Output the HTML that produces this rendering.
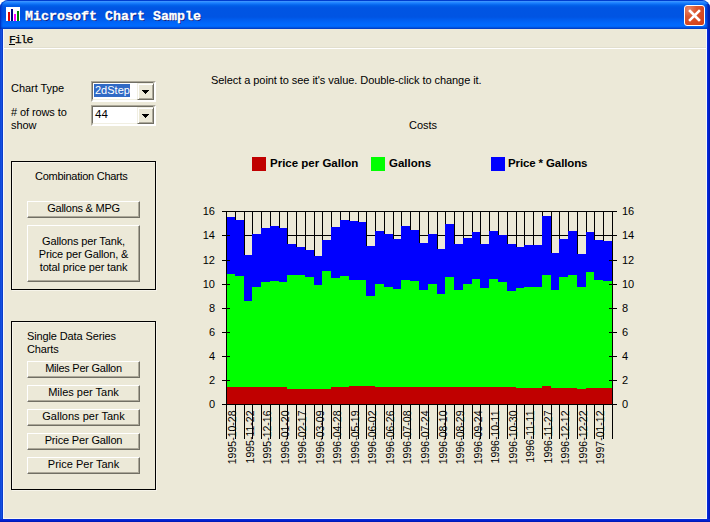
<!DOCTYPE html>
<html><head><meta charset="utf-8">
<style>
html,body{margin:0;padding:0;width:710px;height:522px;overflow:hidden;background:#fff;}
body{position:relative;font-family:"Liberation Sans",sans-serif;font-size:11px;color:#000;}
.abs{position:absolute;}
#win{position:absolute;left:0;top:0;width:710px;height:522px;border-radius:8px 8px 0 0;overflow:hidden;
 background:linear-gradient(to right,#0019CF 0,#0831D9 1px,#166AEE 2px,#166AEE 3px,transparent 3px);}
#title{position:absolute;left:0;top:0;width:710px;height:29px;
 background:linear-gradient(to bottom,#0058EE 0,#0058EE 1px,#3A93FF 1px,#3A93FF 2px,#288EFF 2px,#1C7FFF 3px,#0F71F5 4px,#0466EC 5px,#005CE8 6px,#0055E3 8px,#0054E3 17px,#005EF0 20px,#0066FA 23px,#006BFF 26px,#0060F0 27px,#0048D0 28px,#0038C0 29px);}
#frame{position:absolute;left:0;top:29px;width:710px;height:493px;background:#0831D9;}
#frameL{position:absolute;left:0;top:29px;width:3px;height:493px;background:linear-gradient(to right,#0A3FD0 0,#1450E0 1px,#1450E0 2px,#0A3CCB 2px,#0A3CCB 3px);}
#frameR{position:absolute;left:707px;top:29px;width:3px;height:493px;background:linear-gradient(to right,#0831D9 0,#0019CF 2px,#001EA0 3px);}
#frameB{position:absolute;left:0;top:519px;width:710px;height:3px;background:linear-gradient(to bottom,#0831D9 0,#0019CF 2px,#001EA0 3px);}
#client{position:absolute;left:3px;top:29px;width:704px;height:490px;background:#ECE9D8;}
#cl{position:absolute;left:3px;top:29px;width:1px;height:490px;background:#F4F7FE;}
#cr{position:absolute;left:706px;top:29px;width:1px;height:490px;background:#F4F7FE;}
#cb{position:absolute;left:3px;top:518px;width:704px;height:1px;background:#FAF8F0;}
#icon{position:absolute;left:6px;top:7px;width:14px;height:14px;background:#fff;}
#icon i{position:absolute;bottom:0;width:2px;}
#ttext{position:absolute;left:25px;top:9px;-webkit-text-stroke:0.3px #fff;font-family:"Liberation Mono",monospace;font-weight:bold;font-size:13.33px;line-height:16px;color:#fff;text-shadow:1px 1px 0 #0A1E80;white-space:pre;}
#close{position:absolute;left:684px;top:5px;width:19px;height:19px;border:1px solid #fff;border-radius:3px;
 background:radial-gradient(circle at 20% 15%,#E8876A 0,#DB5730 35%,#D5461E 75%,#D23C14 100%);}
#menu{position:absolute;left:9px;top:33px;font-family:"Liberation Mono",monospace;font-size:11.5px;line-height:13px;letter-spacing:-1.1px;white-space:pre;-webkit-text-stroke:0.25px #000;}
#sep{position:absolute;left:4px;top:48px;width:702px;height:1px;background:#fff;}
#sep2{position:absolute;left:4px;top:47px;width:702px;height:1px;background:#E2DFCE;}
.lbl{position:absolute;white-space:pre;font-size:11px;line-height:13px;}
.combo{position:absolute;width:61px;height:17px;border:2px solid;border-color:#ACA899 #fff #fff #ACA899;background:#fff;}
.combo .in{position:absolute;left:-1px;top:-1px;width:62px;height:18px;border:1px solid;border-color:#716F64 #F1EFE2 #F1EFE2 #716F64;box-sizing:border-box;}
.combo .btn{position:absolute;left:44px;top:0px;width:17px;height:17px;box-sizing:border-box;background:#ECE9D8;border:1px solid;border-color:#F1EFE2 #716F64 #716F64 #F1EFE2;box-shadow:inset 1px 1px 0 #fff,inset -1px -1px 0 #ACA899;}
.combo .arr{position:absolute;left:4px;top:6px;width:7px;height:4px;}
.combo .arr i{position:absolute;height:1px;background:#000;}
.combo .txt{position:absolute;left:1px;top:1px;font-size:11px;line-height:13px;white-space:pre;}
.grp{position:absolute;border:1px solid #000;box-sizing:border-box;box-shadow:inset 1px 1px 0 #F6F4EA,1px 1px 0 #F6F4EA;}
.b{position:absolute;box-sizing:border-box;letter-spacing:-0.25px;background:#ECE9D8;border:1px solid;border-color:#fff #716F64 #716F64 #fff;box-shadow:inset -1px -1px 0 #ACA899;text-align:center;font-size:11px;line-height:13px;white-space:pre;}
.sq{position:absolute;width:14px;height:14px;}
.lg{position:absolute;font-weight:bold;font-size:11.5px;line-height:13px;white-space:pre;}
.yl{font-family:"Liberation Sans",sans-serif;font-size:11px;fill:#000;}
.xl{font-family:"Liberation Sans",sans-serif;font-size:10.5px;fill:#000;}
</style></head><body>
<div id="win">
 <div id="title"></div>
 <div style="position:absolute;left:705px;top:4px;width:5px;height:25px;background:linear-gradient(to right,rgba(0,40,200,0) 0,rgba(0,40,200,0.5) 2px,#0028B8 3px,#001EA0 5px)"></div>
 <div style="position:absolute;left:0;top:0;width:710px;height:40px;box-sizing:border-box;border:1px solid rgba(0,40,180,0.55);border-bottom:none;border-radius:8px 8px 0 0"></div>
 <div style="position:absolute;left:0;top:4px;width:3px;height:25px;background:linear-gradient(to right,rgba(0,40,190,0.7),rgba(0,40,190,0))"></div>
 <div id="frameL"></div><div id="frameR"></div><div id="frameB"></div>
 <div id="client"></div>
 <div id="cl"></div><div id="cr"></div><div id="cb"></div>
 <div id="icon"><i style="left:2px;height:9px;background:#E00000"></i><i style="left:5px;height:12px;background:#000080"></i><i style="left:8px;height:7px;background:#FF00FF"></i><i style="left:11px;height:10px;background:#008000"></i></div>
 <div id="ttext">Microsoft Chart Sample</div>
 <div id="close"><svg width="19" height="19" style="position:absolute;left:0;top:0"><path d="M5 5 L14 14 M14 5 L5 14" stroke="#fff" stroke-width="2.6" stroke-linecap="square"/></svg></div>
</div>
<div id="menu">File</div><div style="position:absolute;left:9px;top:44px;width:6px;height:1px;background:#000"></div>
<div id="sep2"></div><div id="sep"></div>

<div class="lbl" style="left:11px;top:82px;letter-spacing:-0.05px">Chart Type</div>
<div class="lbl" style="left:11px;top:106px;letter-spacing:-0.1px"># of rows to
show</div>
<div class="combo" style="left:91px;top:81px"><div class="in"></div><div class="txt" style="left:1px;top:1px;width:36px;height:13px;background:#316AC5;color:#fff;font-size:11px;text-indent:1px">2dStep</div><div class="btn"><div class="arr"><i style="left:0;top:0;width:7px"></i><i style="left:1px;top:1px;width:5px"></i><i style="left:2px;top:2px;width:3px"></i><i style="left:3px;top:3px;width:1px"></i></div></div></div>
<div class="combo" style="left:91px;top:105px"><div class="in"></div><div class="txt" style="left:2px;font-size:11.5px">44</div><div class="btn"><div class="arr"><i style="left:0;top:0;width:7px"></i><i style="left:1px;top:1px;width:5px"></i><i style="left:2px;top:2px;width:3px"></i><i style="left:3px;top:3px;width:1px"></i></div></div></div>

<div class="grp" style="left:11px;top:161px;width:145px;height:129px"></div>
<div class="lbl" style="left:35px;top:170px;letter-spacing:-0.26px">Combination Charts</div>
<div class="b" style="left:27px;top:201px;width:113px;height:17px">Gallons &amp; MPG</div>
<div class="b" style="left:27px;top:225px;width:113px;height:57px;padding-top:9px;letter-spacing:-0.15px">Gallons per Tank,
Price per Gallon, &amp;
total price per tank</div>

<div class="grp" style="left:11px;top:321px;width:145px;height:169px"></div>
<div class="lbl" style="left:27px;top:330px;letter-spacing:-0.12px">Single Data Series
Charts</div>
<div class="b" style="left:27px;top:361px;width:113px;height:17px">Miles Per Gallon</div>
<div class="b" style="left:27px;top:385px;width:113px;height:17px;letter-spacing:0">Miles per Tank</div>
<div class="b" style="left:27px;top:409px;width:113px;height:17px;letter-spacing:0">Gallons per Tank</div>
<div class="b" style="left:27px;top:433px;width:113px;height:17px;letter-spacing:-0.15px">Price Per Gallon</div>
<div class="b" style="left:27px;top:457px;width:113px;height:17px;letter-spacing:0">Price Per Tank</div>

<div class="lbl" style="left:211px;top:74px;letter-spacing:-0.06px">Select a point to see it's value. Double-click to change it.</div>
<div class="lbl" style="left:409px;top:119px">Costs</div>
<div class="sq" style="left:252px;top:157px;background:#C00000"></div>
<div class="lg" style="left:270px;top:157px">Price per Gallon</div>
<div class="sq" style="left:371px;top:157px;background:#00FF00"></div>
<div class="lg" style="left:389px;top:157px">Gallons</div>
<div class="sq" style="left:491px;top:157px;background:#0000FF"></div>
<div class="lg" style="left:508px;top:157px;letter-spacing:-0.12px">Price * Gallons</div>
<svg width="710" height="522" style="position:absolute;left:0;top:0" shape-rendering="crispEdges"><rect x="235" y="211" width="1" height="193" fill="#000"/><rect x="244" y="211" width="1" height="193" fill="#000"/><rect x="252" y="211" width="1" height="193" fill="#000"/><rect x="261" y="211" width="1" height="193" fill="#000"/><rect x="270" y="211" width="1" height="193" fill="#000"/><rect x="279" y="211" width="1" height="193" fill="#000"/><rect x="287" y="211" width="1" height="193" fill="#000"/><rect x="296" y="211" width="1" height="193" fill="#000"/><rect x="305" y="211" width="1" height="193" fill="#000"/><rect x="314" y="211" width="1" height="193" fill="#000"/><rect x="322" y="211" width="1" height="193" fill="#000"/><rect x="331" y="211" width="1" height="193" fill="#000"/><rect x="340" y="211" width="1" height="193" fill="#000"/><rect x="349" y="211" width="1" height="193" fill="#000"/><rect x="358" y="211" width="1" height="193" fill="#000"/><rect x="366" y="211" width="1" height="193" fill="#000"/><rect x="375" y="211" width="1" height="193" fill="#000"/><rect x="384" y="211" width="1" height="193" fill="#000"/><rect x="393" y="211" width="1" height="193" fill="#000"/><rect x="401" y="211" width="1" height="193" fill="#000"/><rect x="410" y="211" width="1" height="193" fill="#000"/><rect x="419" y="211" width="1" height="193" fill="#000"/><rect x="428" y="211" width="1" height="193" fill="#000"/><rect x="437" y="211" width="1" height="193" fill="#000"/><rect x="445" y="211" width="1" height="193" fill="#000"/><rect x="454" y="211" width="1" height="193" fill="#000"/><rect x="463" y="211" width="1" height="193" fill="#000"/><rect x="472" y="211" width="1" height="193" fill="#000"/><rect x="480" y="211" width="1" height="193" fill="#000"/><rect x="489" y="211" width="1" height="193" fill="#000"/><rect x="498" y="211" width="1" height="193" fill="#000"/><rect x="507" y="211" width="1" height="193" fill="#000"/><rect x="516" y="211" width="1" height="193" fill="#000"/><rect x="524" y="211" width="1" height="193" fill="#000"/><rect x="533" y="211" width="1" height="193" fill="#000"/><rect x="542" y="211" width="1" height="193" fill="#000"/><rect x="551" y="211" width="1" height="193" fill="#000"/><rect x="559" y="211" width="1" height="193" fill="#000"/><rect x="568" y="211" width="1" height="193" fill="#000"/><rect x="577" y="211" width="1" height="193" fill="#000"/><rect x="586" y="211" width="1" height="193" fill="#000"/><rect x="594" y="211" width="1" height="193" fill="#000"/><rect x="603" y="211" width="1" height="193" fill="#000"/><rect x="226" y="211" width="386" height="1" fill="#000"/><rect x="226" y="235" width="386" height="1" fill="#000"/><rect x="226" y="260" width="386" height="1" fill="#000"/><rect x="226" y="284" width="386" height="1" fill="#000"/><rect x="226" y="308" width="386" height="1" fill="#000"/><rect x="226" y="332" width="386" height="1" fill="#000"/><rect x="226" y="356" width="386" height="1" fill="#000"/><rect x="226" y="380" width="386" height="1" fill="#000"/><rect x="226" y="404" width="386" height="1" fill="#000"/><rect x="227" y="217" width="8" height="187" fill="#0000FF"/><rect x="235" y="220" width="9" height="184" fill="#0000FF"/><rect x="244" y="255" width="8" height="149" fill="#0000FF"/><rect x="252" y="234" width="9" height="170" fill="#0000FF"/><rect x="261" y="228" width="9" height="176" fill="#0000FF"/><rect x="270" y="226" width="9" height="178" fill="#0000FF"/><rect x="279" y="228" width="8" height="176" fill="#0000FF"/><rect x="287" y="244" width="9" height="160" fill="#0000FF"/><rect x="296" y="247" width="9" height="157" fill="#0000FF"/><rect x="305" y="250" width="9" height="154" fill="#0000FF"/><rect x="314" y="256" width="8" height="148" fill="#0000FF"/><rect x="322" y="240" width="9" height="164" fill="#0000FF"/><rect x="331" y="227" width="9" height="177" fill="#0000FF"/><rect x="340" y="220" width="9" height="184" fill="#0000FF"/><rect x="349" y="221" width="9" height="183" fill="#0000FF"/><rect x="358" y="222" width="8" height="182" fill="#0000FF"/><rect x="366" y="246" width="9" height="158" fill="#0000FF"/><rect x="375" y="231" width="9" height="173" fill="#0000FF"/><rect x="384" y="234" width="9" height="170" fill="#0000FF"/><rect x="393" y="239" width="8" height="165" fill="#0000FF"/><rect x="401" y="226" width="9" height="178" fill="#0000FF"/><rect x="410" y="230" width="9" height="174" fill="#0000FF"/><rect x="419" y="243" width="9" height="161" fill="#0000FF"/><rect x="428" y="234" width="9" height="170" fill="#0000FF"/><rect x="437" y="249" width="8" height="155" fill="#0000FF"/><rect x="445" y="224" width="9" height="180" fill="#0000FF"/><rect x="454" y="244" width="9" height="160" fill="#0000FF"/><rect x="463" y="238" width="9" height="166" fill="#0000FF"/><rect x="472" y="232" width="8" height="172" fill="#0000FF"/><rect x="480" y="244" width="9" height="160" fill="#0000FF"/><rect x="489" y="231" width="9" height="173" fill="#0000FF"/><rect x="498" y="235" width="9" height="169" fill="#0000FF"/><rect x="507" y="244" width="9" height="160" fill="#0000FF"/><rect x="516" y="247" width="8" height="157" fill="#0000FF"/><rect x="524" y="245" width="9" height="159" fill="#0000FF"/><rect x="533" y="245" width="9" height="159" fill="#0000FF"/><rect x="542" y="216" width="9" height="188" fill="#0000FF"/><rect x="551" y="253" width="8" height="151" fill="#0000FF"/><rect x="559" y="239" width="9" height="165" fill="#0000FF"/><rect x="568" y="231" width="9" height="173" fill="#0000FF"/><rect x="577" y="254" width="9" height="150" fill="#0000FF"/><rect x="586" y="232" width="8" height="172" fill="#0000FF"/><rect x="594" y="240" width="9" height="164" fill="#0000FF"/><rect x="603" y="241" width="9" height="163" fill="#0000FF"/><rect x="227" y="274" width="8" height="130" fill="#00FF00"/><rect x="235" y="276" width="9" height="128" fill="#00FF00"/><rect x="244" y="301" width="8" height="103" fill="#00FF00"/><rect x="252" y="287" width="9" height="117" fill="#00FF00"/><rect x="261" y="282" width="9" height="122" fill="#00FF00"/><rect x="270" y="281" width="9" height="123" fill="#00FF00"/><rect x="279" y="282" width="8" height="122" fill="#00FF00"/><rect x="287" y="275" width="9" height="129" fill="#00FF00"/><rect x="296" y="275" width="9" height="129" fill="#00FF00"/><rect x="305" y="277" width="9" height="127" fill="#00FF00"/><rect x="314" y="285" width="8" height="119" fill="#00FF00"/><rect x="322" y="271" width="9" height="133" fill="#00FF00"/><rect x="331" y="278" width="9" height="126" fill="#00FF00"/><rect x="340" y="276" width="9" height="128" fill="#00FF00"/><rect x="349" y="280" width="9" height="124" fill="#00FF00"/><rect x="358" y="280" width="8" height="124" fill="#00FF00"/><rect x="366" y="296" width="9" height="108" fill="#00FF00"/><rect x="375" y="284" width="9" height="120" fill="#00FF00"/><rect x="384" y="287" width="9" height="117" fill="#00FF00"/><rect x="393" y="289" width="8" height="115" fill="#00FF00"/><rect x="401" y="280" width="9" height="124" fill="#00FF00"/><rect x="410" y="281" width="9" height="123" fill="#00FF00"/><rect x="419" y="290" width="9" height="114" fill="#00FF00"/><rect x="428" y="284" width="9" height="120" fill="#00FF00"/><rect x="437" y="294" width="8" height="110" fill="#00FF00"/><rect x="445" y="277" width="9" height="127" fill="#00FF00"/><rect x="454" y="290" width="9" height="114" fill="#00FF00"/><rect x="463" y="284" width="9" height="120" fill="#00FF00"/><rect x="472" y="279" width="8" height="125" fill="#00FF00"/><rect x="480" y="288" width="9" height="116" fill="#00FF00"/><rect x="489" y="279" width="9" height="125" fill="#00FF00"/><rect x="498" y="282" width="9" height="122" fill="#00FF00"/><rect x="507" y="291" width="9" height="113" fill="#00FF00"/><rect x="516" y="288" width="8" height="116" fill="#00FF00"/><rect x="524" y="287" width="9" height="117" fill="#00FF00"/><rect x="533" y="287" width="9" height="117" fill="#00FF00"/><rect x="542" y="275" width="9" height="129" fill="#00FF00"/><rect x="551" y="290" width="8" height="114" fill="#00FF00"/><rect x="559" y="277" width="9" height="127" fill="#00FF00"/><rect x="568" y="275" width="9" height="129" fill="#00FF00"/><rect x="577" y="287" width="9" height="117" fill="#00FF00"/><rect x="586" y="272" width="8" height="132" fill="#00FF00"/><rect x="594" y="280" width="9" height="124" fill="#00FF00"/><rect x="603" y="281" width="9" height="123" fill="#00FF00"/><rect x="227" y="387" width="8" height="17" fill="#C00000"/><rect x="235" y="387" width="9" height="17" fill="#C00000"/><rect x="244" y="387" width="8" height="17" fill="#C00000"/><rect x="252" y="387" width="9" height="17" fill="#C00000"/><rect x="261" y="387" width="9" height="17" fill="#C00000"/><rect x="270" y="387" width="9" height="17" fill="#C00000"/><rect x="279" y="387" width="8" height="17" fill="#C00000"/><rect x="287" y="389" width="9" height="15" fill="#C00000"/><rect x="296" y="389" width="9" height="15" fill="#C00000"/><rect x="305" y="389" width="9" height="15" fill="#C00000"/><rect x="314" y="389" width="8" height="15" fill="#C00000"/><rect x="322" y="389" width="9" height="15" fill="#C00000"/><rect x="331" y="387" width="9" height="17" fill="#C00000"/><rect x="340" y="387" width="9" height="17" fill="#C00000"/><rect x="349" y="386" width="9" height="18" fill="#C00000"/><rect x="358" y="386" width="8" height="18" fill="#C00000"/><rect x="366" y="386" width="9" height="18" fill="#C00000"/><rect x="375" y="387" width="9" height="17" fill="#C00000"/><rect x="384" y="387" width="9" height="17" fill="#C00000"/><rect x="393" y="387" width="8" height="17" fill="#C00000"/><rect x="401" y="387" width="9" height="17" fill="#C00000"/><rect x="410" y="387" width="9" height="17" fill="#C00000"/><rect x="419" y="387" width="9" height="17" fill="#C00000"/><rect x="428" y="387" width="9" height="17" fill="#C00000"/><rect x="437" y="387" width="8" height="17" fill="#C00000"/><rect x="445" y="387" width="9" height="17" fill="#C00000"/><rect x="454" y="387" width="9" height="17" fill="#C00000"/><rect x="463" y="387" width="9" height="17" fill="#C00000"/><rect x="472" y="387" width="8" height="17" fill="#C00000"/><rect x="480" y="387" width="9" height="17" fill="#C00000"/><rect x="489" y="387" width="9" height="17" fill="#C00000"/><rect x="498" y="387" width="9" height="17" fill="#C00000"/><rect x="507" y="387" width="9" height="17" fill="#C00000"/><rect x="516" y="388" width="8" height="16" fill="#C00000"/><rect x="524" y="388" width="9" height="16" fill="#C00000"/><rect x="533" y="388" width="9" height="16" fill="#C00000"/><rect x="542" y="386" width="9" height="18" fill="#C00000"/><rect x="551" y="388" width="8" height="16" fill="#C00000"/><rect x="559" y="388" width="9" height="16" fill="#C00000"/><rect x="568" y="388" width="9" height="16" fill="#C00000"/><rect x="577" y="389" width="9" height="15" fill="#C00000"/><rect x="586" y="388" width="8" height="16" fill="#C00000"/><rect x="594" y="388" width="9" height="16" fill="#C00000"/><rect x="603" y="388" width="9" height="16" fill="#C00000"/><rect x="226" y="211" width="1" height="194" fill="#000"/><rect x="612" y="211" width="1" height="194" fill="#000"/><rect x="222" y="404" width="391" height="1" fill="#000"/><rect x="222" y="211" width="8" height="1" fill="#000"/><rect x="609" y="211" width="8" height="1" fill="#000"/><rect x="222" y="235" width="8" height="1" fill="#000"/><rect x="609" y="235" width="8" height="1" fill="#000"/><rect x="222" y="260" width="8" height="1" fill="#000"/><rect x="609" y="260" width="8" height="1" fill="#000"/><rect x="222" y="284" width="8" height="1" fill="#000"/><rect x="609" y="284" width="8" height="1" fill="#000"/><rect x="222" y="308" width="8" height="1" fill="#000"/><rect x="609" y="308" width="8" height="1" fill="#000"/><rect x="222" y="332" width="8" height="1" fill="#000"/><rect x="609" y="332" width="8" height="1" fill="#000"/><rect x="222" y="356" width="8" height="1" fill="#000"/><rect x="609" y="356" width="8" height="1" fill="#000"/><rect x="222" y="380" width="8" height="1" fill="#000"/><rect x="609" y="380" width="8" height="1" fill="#000"/><rect x="222" y="404" width="8" height="1" fill="#000"/><rect x="609" y="404" width="8" height="1" fill="#000"/><rect x="226" y="404" width="1" height="35" fill="#000"/><rect x="235" y="404" width="1" height="35" fill="#000"/><rect x="244" y="404" width="1" height="35" fill="#000"/><rect x="252" y="404" width="1" height="35" fill="#000"/><rect x="261" y="404" width="1" height="35" fill="#000"/><rect x="270" y="404" width="1" height="35" fill="#000"/><rect x="279" y="404" width="1" height="35" fill="#000"/><rect x="287" y="404" width="1" height="35" fill="#000"/><rect x="296" y="404" width="1" height="35" fill="#000"/><rect x="305" y="404" width="1" height="35" fill="#000"/><rect x="314" y="404" width="1" height="35" fill="#000"/><rect x="322" y="404" width="1" height="35" fill="#000"/><rect x="331" y="404" width="1" height="35" fill="#000"/><rect x="340" y="404" width="1" height="35" fill="#000"/><rect x="349" y="404" width="1" height="35" fill="#000"/><rect x="358" y="404" width="1" height="35" fill="#000"/><rect x="366" y="404" width="1" height="35" fill="#000"/><rect x="375" y="404" width="1" height="35" fill="#000"/><rect x="384" y="404" width="1" height="35" fill="#000"/><rect x="393" y="404" width="1" height="35" fill="#000"/><rect x="401" y="404" width="1" height="35" fill="#000"/><rect x="410" y="404" width="1" height="35" fill="#000"/><rect x="419" y="404" width="1" height="35" fill="#000"/><rect x="428" y="404" width="1" height="35" fill="#000"/><rect x="437" y="404" width="1" height="35" fill="#000"/><rect x="445" y="404" width="1" height="35" fill="#000"/><rect x="454" y="404" width="1" height="35" fill="#000"/><rect x="463" y="404" width="1" height="35" fill="#000"/><rect x="472" y="404" width="1" height="35" fill="#000"/><rect x="480" y="404" width="1" height="35" fill="#000"/><rect x="489" y="404" width="1" height="35" fill="#000"/><rect x="498" y="404" width="1" height="35" fill="#000"/><rect x="507" y="404" width="1" height="35" fill="#000"/><rect x="516" y="404" width="1" height="35" fill="#000"/><rect x="524" y="404" width="1" height="35" fill="#000"/><rect x="533" y="404" width="1" height="35" fill="#000"/><rect x="542" y="404" width="1" height="35" fill="#000"/><rect x="551" y="404" width="1" height="35" fill="#000"/><rect x="559" y="404" width="1" height="35" fill="#000"/><rect x="568" y="404" width="1" height="35" fill="#000"/><rect x="577" y="404" width="1" height="35" fill="#000"/><rect x="586" y="404" width="1" height="35" fill="#000"/><rect x="594" y="404" width="1" height="35" fill="#000"/><rect x="603" y="404" width="1" height="35" fill="#000"/><rect x="612" y="404" width="1" height="35" fill="#000"/><text x="215" y="215" text-anchor="end" class="yl">16</text><text x="622" y="215" text-anchor="start" class="yl">16</text><text x="215" y="239" text-anchor="end" class="yl">14</text><text x="622" y="239" text-anchor="start" class="yl">14</text><text x="215" y="264" text-anchor="end" class="yl">12</text><text x="622" y="264" text-anchor="start" class="yl">12</text><text x="215" y="288" text-anchor="end" class="yl">10</text><text x="622" y="288" text-anchor="start" class="yl">10</text><text x="215" y="312" text-anchor="end" class="yl">8</text><text x="622" y="312" text-anchor="start" class="yl">8</text><text x="215" y="336" text-anchor="end" class="yl">6</text><text x="622" y="336" text-anchor="start" class="yl">6</text><text x="215" y="360" text-anchor="end" class="yl">4</text><text x="622" y="360" text-anchor="start" class="yl">4</text><text x="215" y="384" text-anchor="end" class="yl">2</text><text x="622" y="384" text-anchor="start" class="yl">2</text><text x="215" y="408" text-anchor="end" class="yl">0</text><text x="622" y="408" text-anchor="start" class="yl">0</text><text transform="translate(236.0,410.5) rotate(-90)" text-anchor="end" class="xl">1995-10-28</text><text transform="translate(253.5,410.5) rotate(-90)" text-anchor="end" class="xl">1995-11-22</text><text transform="translate(271.0,410.5) rotate(-90)" text-anchor="end" class="xl">1995-12-16</text><text transform="translate(288.5,410.5) rotate(-90)" text-anchor="end" class="xl">1996-01-20</text><text transform="translate(306.0,410.5) rotate(-90)" text-anchor="end" class="xl">1996-02-17</text><text transform="translate(323.5,410.5) rotate(-90)" text-anchor="end" class="xl">1996-03-09</text><text transform="translate(341.0,410.5) rotate(-90)" text-anchor="end" class="xl">1996-04-28</text><text transform="translate(359.0,410.5) rotate(-90)" text-anchor="end" class="xl">1996-05-19</text><text transform="translate(376.0,410.5) rotate(-90)" text-anchor="end" class="xl">1996-06-02</text><text transform="translate(394.0,410.5) rotate(-90)" text-anchor="end" class="xl">1996-06-26</text><text transform="translate(411.0,410.5) rotate(-90)" text-anchor="end" class="xl">1996-07-08</text><text transform="translate(429.0,410.5) rotate(-90)" text-anchor="end" class="xl">1996-07-24</text><text transform="translate(446.5,410.5) rotate(-90)" text-anchor="end" class="xl">1996-08-10</text><text transform="translate(464.0,410.5) rotate(-90)" text-anchor="end" class="xl">1996-08-29</text><text transform="translate(481.5,410.5) rotate(-90)" text-anchor="end" class="xl">1996-09-24</text><text transform="translate(499.0,410.5) rotate(-90)" text-anchor="end" class="xl">1996-10-11</text><text transform="translate(517.0,410.5) rotate(-90)" text-anchor="end" class="xl">1996-10-30</text><text transform="translate(534.0,410.5) rotate(-90)" text-anchor="end" class="xl">1996-11-11</text><text transform="translate(552.0,410.5) rotate(-90)" text-anchor="end" class="xl">1996-11-27</text><text transform="translate(569.0,410.5) rotate(-90)" text-anchor="end" class="xl">1996-12-12</text><text transform="translate(587.0,410.5) rotate(-90)" text-anchor="end" class="xl">1996-12-22</text><text transform="translate(604.0,410.5) rotate(-90)" text-anchor="end" class="xl">1997-01-12</text></svg>
</body></html>
